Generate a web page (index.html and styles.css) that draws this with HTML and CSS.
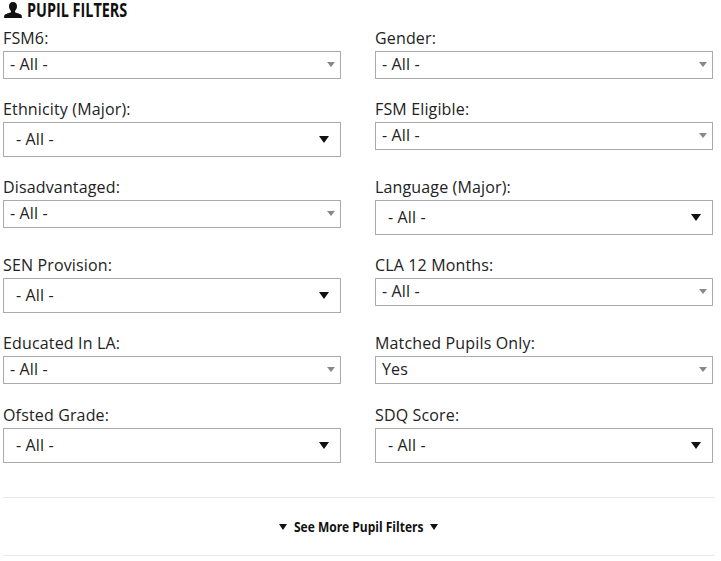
FILE: index.html
```html
<!DOCTYPE html>
<html lang="en">
<head>
  <meta charset="UTF-8">
  <title>Pupil Filters</title>
  <link rel="stylesheet" href="styles.css">
</head>
<body>
  <h2 class="heading">
    <svg class="person" viewBox="0 0 18 16" width="18" height="16"><path d="M9 0C6.4 0 5 1.900 5 4.300 5 6.300 5.900 8 7 9L7 10.300C5 11.300 1.200 11.800.3 13.500L0 16 18 16 17.700 13.500C16.800 11.800 13 11.300 11 10.300L11 9C12.100 8 13 6.300 13 4.300 13 1.900 11.600 0 9 0Z"/></svg>
    <span class="heading-text">PUPIL FILTERS</span>
  </h2>

  <div class="filters">
    <div class="field">
      <label>FSM6:</label>
      <div class="select small"><span>- All -</span><i class="arrow"></i></div>
    </div>
    <div class="field">
      <label>Gender:</label>
      <div class="select small"><span>- All -</span><i class="arrow"></i></div>
    </div>
    <div class="field">
      <label>Ethnicity (Major):</label>
      <div class="select large"><span>- All -</span><i class="arrow"></i></div>
    </div>
    <div class="field">
      <label>FSM Eligible:</label>
      <div class="select small"><span>- All -</span><i class="arrow"></i></div>
    </div>
    <div class="field">
      <label>Disadvantaged:</label>
      <div class="select small"><span>- All -</span><i class="arrow"></i></div>
    </div>
    <div class="field">
      <label>Language (Major):</label>
      <div class="select large"><span>- All -</span><i class="arrow"></i></div>
    </div>
    <div class="field">
      <label>SEN Provision:</label>
      <div class="select large"><span>- All -</span><i class="arrow"></i></div>
    </div>
    <div class="field">
      <label>CLA 12 Months:</label>
      <div class="select small"><span>- All -</span><i class="arrow"></i></div>
    </div>
    <div class="field">
      <label>Educated In LA:</label>
      <div class="select small"><span>- All -</span><i class="arrow"></i></div>
    </div>
    <div class="field">
      <label>Matched Pupils Only:</label>
      <div class="select small"><span>Yes</span><i class="arrow"></i></div>
    </div>
    <div class="field field-last">
      <label>Ofsted Grade:</label>
      <div class="select large"><span>- All -</span><i class="arrow"></i></div>
    </div>
    <div class="field field-last">
      <label>SDQ Score:</label>
      <div class="select large"><span>- All -</span><i class="arrow"></i></div>
    </div>
  </div>

  <div class="more">
    <i class="more-arrow"></i>
    <span class="more-text">See More Pupil Filters</span>
    <i class="more-arrow"></i>
  </div>
</body>
</html>
```

FILE: styles.css
```css
body {
  margin: 0;
  padding: 0 8px 0 3px;
  background-color: #fff;
  color: #222;
  font-family: "Open Sans", Arial, sans-serif;
  font-size: 16px;
  letter-spacing: 0.15px;
}
.heading {
  display: flex;
  align-items: center;
  gap: 5px;
  height: 20px;
  margin: 0 0 8px 1px;
  color: #111;
  font-size: 20px;
  line-height: 20px;
  font-weight: 700;
  letter-spacing: 0;
}
.heading-text {
  display: inline-block;
  transform: scaleX(0.72);
  transform-origin: left center;
  white-space: nowrap;
}
.person {
  fill: #111;
}
.filters {
  display: grid;
  grid-template-columns: 338px 338px;
  column-gap: 34px;
  row-gap: 20px;
  align-items: start;
}
.field-last {
  margin-top: 1px;
}
.field label {
  display: block;
  height: 23px;
  line-height: 20px;
}
.select {
  position: relative;
  box-sizing: border-box;
  display: flex;
  align-items: center;
  border: 1px solid #aaa;
  background-color: #fff;
}
.select span {
  position: relative;
  top: -1px;
}
.small {
  height: 28px;
  padding-left: 6px;
}
.large {
  height: 35px;
  padding-left: 12px;
}
.arrow {
  position: absolute;
  top: 50%;
  right: 5px;
  margin-top: -3px;
  border-style: solid;
  border-width: 5px 4px 0;
  border-color: #888 transparent transparent;
}
.large .arrow {
  right: 11px;
  margin-top: -4px;
  border-width: 7px 5px 0;
  border-color: #111 transparent transparent;
}
.more {
  display: flex;
  align-items: center;
  justify-content: center;
  gap: 7px;
  height: 57px;
  margin: 34px -1px 0 0;
  border-top: 1px solid #e8e8e8;
  border-bottom: 1px solid #e8e8e8;
  color: #111;
  font-size: 15px;
  line-height: 20px;
  font-weight: 700;
  letter-spacing: 0;
}
.more-text {
  display: inline-block;
  width: 129px;
  margin-top: -2px;
  transform: scaleX(0.8);
  transform-origin: left center;
  white-space: nowrap;
}
.more-arrow {
  border-style: solid;
  border-width: 6px 4px 0;
  border-color: #111 transparent transparent;
}
```
